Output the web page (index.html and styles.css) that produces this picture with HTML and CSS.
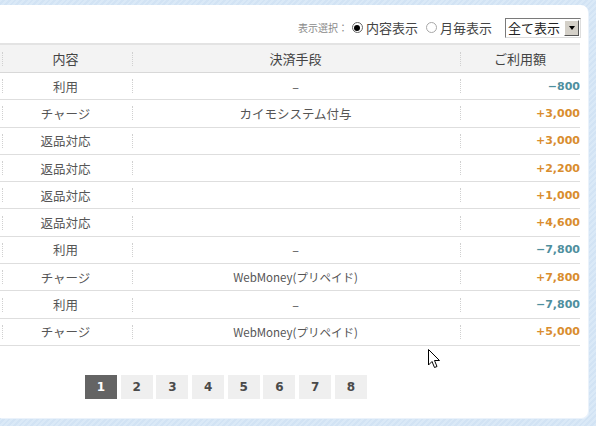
FILE: index.html
```html
<!DOCTYPE html>
<html lang="ja">
<head>
<meta charset="utf-8">
<link rel="stylesheet" href="styles.css">
</head>
<body>
<div class="frame">
  <div class="panel">
    <div class="toolbar">
      <span class="label">表示選択：</span>
      <span class="radio checked"></span><span class="opt">内容表示</span>
      <span class="radio"></span><span class="opt">月毎表示</span>
      <span class="select"><span class="sel-text">全て表示</span><span class="sel-btn"><span class="tri"></span></span></span>
    </div>
    <div class="table">
      <div class="row head">
        <div class="c1 sep">内容</div><div class="c2 sep">決済手段</div><div class="c3 sep">ご利用額</div>
      </div>
      <div class="row"><div class="c1 sep">利用</div><div class="c2 sep">–</div><div class="c3 sep amt minus">−800</div></div>
      <div class="row"><div class="c1 sep">チャージ</div><div class="c2 sep">カイモシステム付与</div><div class="c3 sep amt plus">+3,000</div></div>
      <div class="row"><div class="c1 sep">返品対応</div><div class="c2 sep"></div><div class="c3 sep amt plus">+3,000</div></div>
      <div class="row"><div class="c1 sep">返品対応</div><div class="c2 sep"></div><div class="c3 sep amt plus">+2,200</div></div>
      <div class="row"><div class="c1 sep">返品対応</div><div class="c2 sep"></div><div class="c3 sep amt plus">+1,000</div></div>
      <div class="row"><div class="c1 sep">返品対応</div><div class="c2 sep"></div><div class="c3 sep amt plus">+4,600</div></div>
      <div class="row"><div class="c1 sep">利用</div><div class="c2 sep">–</div><div class="c3 sep amt minus">−7,800</div></div>
      <div class="row"><div class="c1 sep">チャージ</div><div class="c2 sep small">WebMoney(プリペイド)</div><div class="c3 sep amt plus">+7,800</div></div>
      <div class="row"><div class="c1 sep">利用</div><div class="c2 sep">–</div><div class="c3 sep amt minus">−7,800</div></div>
      <div class="row"><div class="c1 sep">チャージ</div><div class="c2 sep small">WebMoney(プリペイド)</div><div class="c3 sep amt plus">+5,000</div></div>
    </div>
    <div class="pager">
      <span class="pg active">1</span><span class="pg">2</span><span class="pg">3</span><span class="pg">4</span><span class="pg">5</span><span class="pg">6</span><span class="pg">7</span><span class="pg">8</span>
    </div>
    <svg class="cursor" width="14" height="22" viewBox="0 0 14 22"><path d="M0.5 0.5 L0.5 16 L4 12.5 L6.5 18.5 L9 17.5 L6.5 11.5 L11.5 11.5 Z" fill="#fff" stroke="#000" stroke-width="1"/></svg>
  </div>
</div>
</body>
</html>
```

FILE: styles.css
```css
html, body {
  margin: 0;
  padding: 0;
}
body {
  width: 596px;
  height: 426px;
  overflow: hidden;
  background: #d6e6f6;
  background-image: repeating-linear-gradient(135deg, #dae9f7 0 2px, #d2e3f4 2px 4px);
  font-family: "Noto Sans CJK JP", "Noto Sans", sans-serif;
  color: #555;
}
.frame {
  padding: 5px 8px 0 0;
  height: 426px;
  box-sizing: border-box;
}
.panel {
  position: relative;
  background: #fff;
  height: 413px;
  border-radius: 0 7px 7px 0;
  box-shadow: 1px 1px 0 #eaf2fb;
}
.toolbar {
  display: flex;
  align-items: center;
  justify-content: flex-end;
  height: 21px;
  padding: 12px 7px 0 0;
}
.label {
  font-size: 10px;
  color: #8a8a8a;
  margin-right: 4px;
}
.radio {
  width: 11px;
  height: 11px;
  border-radius: 50%;
  border: 1px solid #a8a8a8;
  box-sizing: border-box;
  background: #fff;
  position: relative;
  margin-right: 3px;
}
.radio.checked {
  border-color: #666;
}
.radio.checked::after {
  content: "";
  position: absolute;
  left: 1.5px;
  top: 1.5px;
  width: 6px;
  height: 6px;
  border-radius: 50%;
  background: #000;
}
.opt {
  font-size: 13px;
  color: #444;
  margin-right: 8px;
}
.select {
  display: flex;
  align-items: center;
  margin-left: 5px;
  width: 76px;
  height: 20px;
  border: 1px solid #7a7a7a;
  border-right-color: #ddd;
  border-bottom-color: #ddd;
  box-sizing: border-box;
  background: #fff;
}
.sel-text {
  flex: 1;
  font-size: 13px;
  color: #222;
  padding-left: 2px;
  line-height: 18px;
}
.sel-btn {
  width: 15px;
  height: 16px;
  margin-right: 1px;
  background: #d4d0c8;
  border: 1px solid;
  border-color: #fff #555 #555 #fff;
  box-sizing: border-box;
  display: flex;
  align-items: center;
  justify-content: center;
}
.tri {
  width: 0;
  height: 0;
  border-left: 3.5px solid transparent;
  border-right: 3.5px solid transparent;
  border-top: 4px solid #000;
}
.table {
  width: 580px;
  margin-top: 5px;
}
.row {
  display: grid;
  grid-template-columns: 131px 329px 120px;
  height: 27.3px;
  box-sizing: border-box;
  border-bottom: 1px solid #dedede;
  align-items: center;
  font-size: 12.5px;
}
.row.head {
  height: 30px;
  border-top: 2px solid #e3e3e3;
  border-bottom: 1px solid #d8d8d8;
  background: #f3f3f3;
  font-size: 13px;
  color: #444;
}
.row > div {
  position: relative;
  height: 100%;
  display: flex;
  align-items: center;
  justify-content: center;
}
.sep::before {
  content: "";
  position: absolute;
  left: 1px;
  top: 50%;
  height: 14px;
  margin-top: -7px;
  border-left: 1px dotted #d0d0d0;
}
.c1.sep::before {
  left: 2px;
}
.c3.sep::before {
  left: 0;
}
.c3.amt {
  justify-content: flex-end;
  font-family: "DejaVu Sans", sans-serif;
  font-weight: bold;
  font-size: 11px;
}
.plus {
  color: #d98d2e;
}
.minus {
  color: #4f8f9e;
}
.small {
  font-size: 11.5px;
}
.pager {
  display: flex;
  gap: 3.7px;
  padding: 29px 0 0 85px;
}
.pg {
  width: 32px;
  height: 24px;
  background: #efefef;
  color: #4a4a4a;
  font-family: "DejaVu Sans", sans-serif;
  font-weight: bold;
  font-size: 12px;
  display: flex;
  align-items: center;
  justify-content: center;
}
.pg.active {
  background: #646464;
  color: #fff;
}
.cursor {
  position: absolute;
  left: 428px;
  top: 344px;
}
```
